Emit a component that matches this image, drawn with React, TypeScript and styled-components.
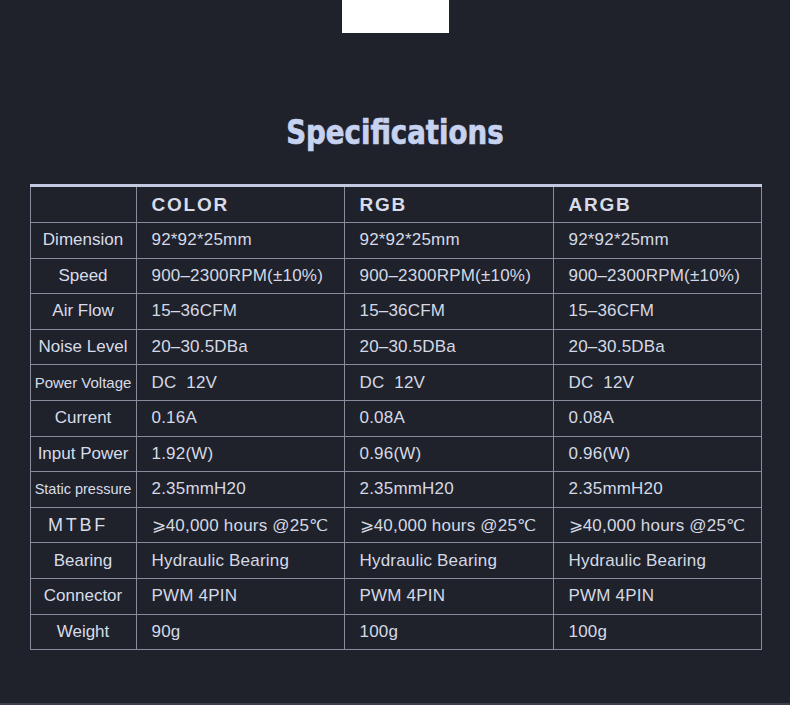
import styled, { createGlobalStyle } from 'styled-components';

const GlobalStyle = createGlobalStyle`
  html, body {
    margin: 0;
    padding: 0;
    background-color: #1f222b;
  }
`;

const Page = styled.div`
  width: 790px;
  height: 705px;
  box-sizing: border-box;
  background-color: #1f222b;
  border-bottom: 2px solid #3c3f47;
  display: flex;
  flex-direction: column;
  align-items: center;
  font-family: 'Liberation Sans', Arial, sans-serif;
  overflow: hidden;
`;

const Tab = styled.div`
  width: 107px;
  height: 33px;
  background-color: #ffffff;
  margin-left: 1px;
`;

const Title = styled.h1`
  margin: 80px 0 0 0;
  height: 40px;
  line-height: 40px;
  display: inline-block;
  font-family: 'DejaVu Sans', 'Liberation Sans', sans-serif;
  font-stretch: condensed;
  font-weight: 700;
  font-size: 33px;
  letter-spacing: 0;
  color: #c6d2f0;
  -webkit-text-stroke: 0.7px #c6d2f0;
  transform: scaleX(0.93);
`;

const Table = styled.table`
  margin-top: 31px;
  margin-left: 1px;
  width: 731px;
  table-layout: fixed;
  border-collapse: collapse;
  border-top: 3px solid #c3cadf;
`;

const Col = styled.col<{ $width: number }>`
  width: ${(p) => p.$width}px;
`;

const Cell = styled.td`
  border: 1px solid #878d9d;
  height: 34.6px;
  padding: 0 0 0 15px;
  font-size: 17px;
  letter-spacing: 0.2px;
  color: #d5d9e5;
  white-space: pre;
  vertical-align: middle;
`;

const HeadCell = styled.th`
  border: 1px solid #878d9d;
  height: 35px;
  padding: 0 0 0 15px;
  text-align: left;
  font-weight: 700;
  font-size: 19px;
  letter-spacing: 1.8px;
  color: #d8dce8;
  vertical-align: middle;
`;

const LabelCell = styled.td<{ $size?: number; $shift?: number; $spacing?: number }>`
  border: 1px solid #878d9d;
  height: 34.6px;
  padding: 0 ${(p) => p.$shift ?? 0}px 0 0;
  text-align: center;
  font-size: ${(p) => p.$size ?? 17}px;
  letter-spacing: ${(p) => p.$spacing ?? 0}px;
  color: #d8dce8;
  white-space: nowrap;
  vertical-align: middle;
`;

const CornerCell = styled.th`
  border: 1px solid #878d9d;
`;

interface Spec {
  label: string;
  size?: number;
  shift?: number;
  spacing?: number;
  values: [string, string, string];
}

const speed = '900–2300RPM(±10%)';
const mtbf = '⩾40,000 hours @25℃';

const specs: Spec[] = [
  { label: 'Dimension', values: ['92*92*25mm', '92*92*25mm', '92*92*25mm'] },
  { label: 'Speed', values: [speed, speed, speed] },
  { label: 'Air Flow', values: ['15–36CFM', '15–36CFM', '15–36CFM'] },
  { label: 'Noise Level', values: ['20–30.5DBa', '20–30.5DBa', '20–30.5DBa'] },
  { label: 'Power Voltage', size: 15, values: ['DC  12V', 'DC  12V', 'DC  12V'] },
  { label: 'Current', values: ['0.16A', '0.08A', '0.08A'] },
  { label: 'Input Power', values: ['1.92(W)', '0.96(W)', '0.96(W)'] },
  { label: 'Static pressure', size: 14.5, values: ['2.35mmH20', '2.35mmH20', '2.35mmH20'] },
  { label: 'MTBF', size: 18, shift: 10, spacing: 2.8, values: [mtbf, mtbf, mtbf] },
  { label: 'Bearing', values: ['Hydraulic Bearing', 'Hydraulic Bearing', 'Hydraulic Bearing'] },
  { label: 'Connector', values: ['PWM 4PIN', 'PWM 4PIN', 'PWM 4PIN'] },
  { label: 'Weight', values: ['90g', '100g', '100g'] },
];

const columns = [106, 208, 209, 208];
const models = ['COLOR', 'RGB', 'ARGB'];

const App = () => {
  return (
    <Page>
      <GlobalStyle />
      <Tab />
      <Title>Specifications</Title>
      <Table>
        <colgroup>
          {columns.map((w, i) => (
            <Col key={i} $width={w} />
          ))}
        </colgroup>
        <thead>
          <tr>
            <CornerCell />
            {models.map((m) => (
              <HeadCell key={m}>{m}</HeadCell>
            ))}
          </tr>
        </thead>
        <tbody>
          {specs.map((s) => (
            <tr key={s.label}>
              <LabelCell $size={s.size} $shift={s.shift} $spacing={s.spacing}>
                {s.label}
              </LabelCell>
              {s.values.map((v, i) => (
                <Cell key={i}>{v}</Cell>
              ))}
            </tr>
          ))}
        </tbody>
      </Table>
    </Page>
  );
};

export default App;
